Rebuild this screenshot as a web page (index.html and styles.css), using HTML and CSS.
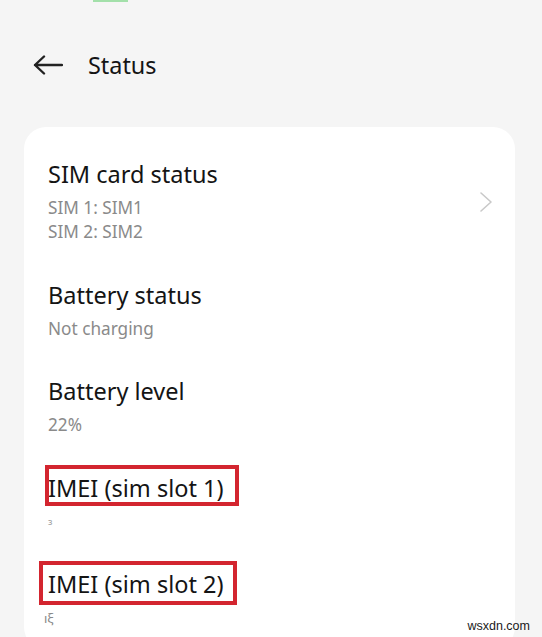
FILE: index.html
```html
<!DOCTYPE html>
<html lang="en">
<head>
    <meta charset="UTF-8">
    <meta name="viewport" content="width=device-width, initial-scale=1.0">
    <title>Status</title>
    <link rel="stylesheet" href="styles.css">
</head>
<body>
    <div class="statusbar-bit"></div>
    <div class="header">
        <svg class="back" width="30" height="20" viewBox="0 0 30 20">
            <path d="M2 10 H29 M11 1.5 L2 10 L11 18.5" fill="none" stroke="#222" stroke-width="2.4" stroke-linecap="round" stroke-linejoin="round"/>
        </svg>
        <span class="title">Status</span>
    </div>
    <div class="card">
        <div class="item with-arrow">
            <div class="text">
                <div class="item-title">SIM card status</div>
                <div class="item-sub">SIM 1: SIM1</div>
                <div class="item-sub">SIM 2: SIM2</div>
            </div>
            <svg class="chevron" width="14" height="22" viewBox="0 0 14 22">
                <path d="M2 2 L12 11 L2 20" fill="none" stroke="#c9c9c9" stroke-width="1.6" stroke-linecap="round" stroke-linejoin="round"/>
            </svg>
        </div>
        <div class="item">
            <div class="item-title">Battery status</div>
            <div class="item-sub">Not charging</div>
        </div>
        <div class="item">
            <div class="item-title">Battery level</div>
            <div class="item-sub">22%</div>
        </div>
        <div class="item">
            <div class="item-title marked">IMEI (sim slot 1)<span class="mark mark-one"></span></div>
            <div class="item-sub"><span class="blur-one">ɜ</span></div>
        </div>
        <div class="item">
            <div class="item-title marked">IMEI (sim slot 2)<span class="mark mark-two"></span></div>
            <div class="item-sub"><span class="blur-two">ıξ</span></div>
        </div>
    </div>
    <div class="watermark">wsxdn.com</div>
</body>
</html>
```

FILE: styles.css
```css
body {
    font-family: "Noto Sans", Roboto, sans-serif;
    background-color: #f5f5f5;
    margin: 0;
    padding: 0;
    height: 637px;
    overflow: hidden;
}
.statusbar-bit {
    margin-left: 93px;
    width: 35px;
    height: 2px;
    background-color: #a3e0aa;
}
.header {
    display: flex;
    align-items: center;
    gap: 25px;
    padding: 48px 0 0 33px;
    height: 30px;
}
.header .back {
    display: block;
}
.header .title {
    font-size: 23.4px;
    line-height: 30px;
    color: #141414;
}
.card {
    background-color: #fff;
    border-radius: 22px;
    margin: 47px 27px 0 24px;
    padding-top: 15px;
}
.item {
    padding: 18px 24px 18.5px 24px;
}
.item.with-arrow {
    display: flex;
    align-items: center;
    justify-content: space-between;
    padding-right: 22px;
}
.item-title {
    font-size: 23.5px;
    line-height: 28px;
    color: #141414;
    margin-bottom: 8px;
}
.item-sub {
    font-size: 17.2px;
    line-height: 24px;
    color: #8a8a8a;
    height: 24px;
}
.marked {
    position: relative;
}
.mark {
    position: absolute;
    border: 4px solid #d3252f;
    box-sizing: border-box;
}
.mark-one {
    left: -3px;
    top: -8.5px;
    width: 194px;
    height: 41px;
}
.mark-two {
    left: -9px;
    top: -9px;
    width: 198px;
    height: 44px;
}
.blur-one {
    font-size: 9px;
    color: #999;
    vertical-align: 6px;
}
.blur-two {
    font-size: 13px;
    color: #888;
    margin-left: -4px;
    vertical-align: 2px;
}
.watermark {
    position: absolute;
    right: 12px;
    top: 619px;
    font-family: "Liberation Sans", Arial, sans-serif;
    font-size: 12.5px;
    line-height: 14px;
    color: #1a1a1a;
}
```
